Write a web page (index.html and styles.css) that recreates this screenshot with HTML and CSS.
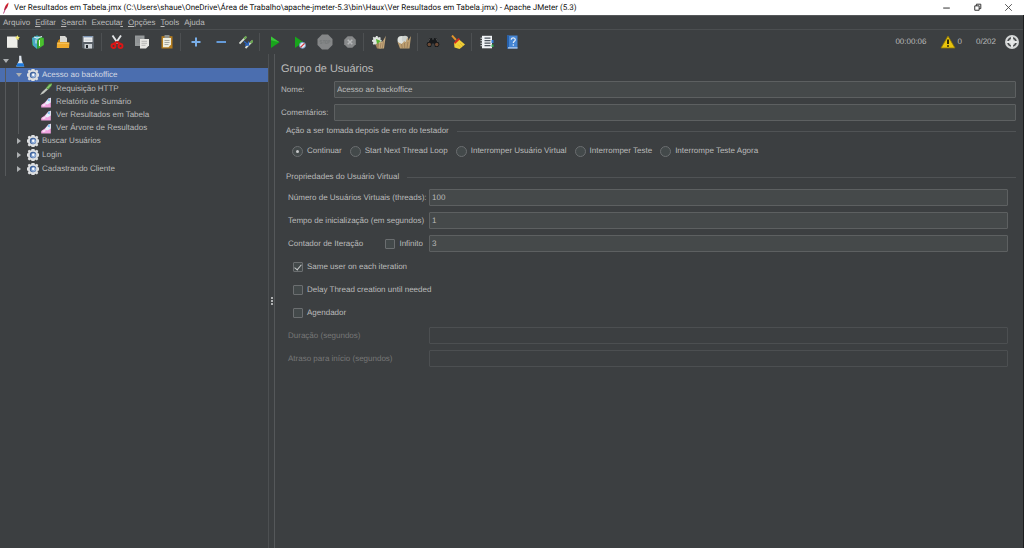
FILE: index.html
```html
<!DOCTYPE html>
<html lang="pt-BR">
<head>
<meta charset="utf-8">
<title>Apache JMeter (5.3)</title>
<link rel="stylesheet" href="styles.css">
</head>
<body>
<svg class="defs" aria-hidden="true">
  <defs>
    <linearGradient id="blueGrad" x1="0" y1="0" x2="1" y2="1"><stop offset="0" stop-color="#5a7db4"/><stop offset="1" stop-color="#b4cdee"/></linearGradient>
    <symbol id="gear" viewBox="0 0 12 12">
      <path d="M4.500 0h3l.3 1.200.8.3L9.900.7l1.400 1.400-.7 1.300.3.900L12 4.500v3l-1.100.3-.3.9.7 1.300-1.400 1.400-1.300-.7-.8.300L7.500 12h-3l-.3-1-.8-.3-1.300.7L.7 10l.7-1.300-.3-.9L0 7.500v-3l1.100-.3.3-.9L.7 2.100 2.100.7l1.300.8.8-.3z" fill="#dddfe1"/>
      <circle cx="6" cy="6" r="3.200" fill="#3c5f99"/>
      <circle cx="6.300" cy="6.200" r="2.500" fill="url(#blueGrad)"/>
      <circle cx="6.200" cy="5.800" r="1.200" fill="#fff"/>
    </symbol>
    <symbol id="chart" viewBox="0 0 10 10">
      <path d="M1 9.500V7.500L4 5.500 7 2l2-.5v8z" fill="#f0a3df"/>
      <path d="M4 6.200L7.200 2 9 1.500v4L6 7z" fill="#e6f2fb"/>
      <path d="M6.200 3.500L8 1.700V4.500z" fill="#6ab4ea"/>
      <path d="M1.500 7.500l2.500-1 1 1-2 1z" fill="#f8e2f5"/>
    </symbol>
  </defs>
</svg>
<div class="window">
  <header class="titlebar">
    <svg class="feather" viewBox="0 0 8 12" aria-hidden="true"><path d="M6.500.5C4 2 2.500 5 2 8.500 4.500 7.500 6.500 4 6.500.5z" fill="#d22128"/><path d="M4.500 4L1.500 11.500" stroke="#a02060" stroke-width=".8"/></svg>
    <span class="caption">Ver Resultados em Tabela.jmx (C:\Users\shaue\OneDrive\Área de Trabalho\apache-jmeter-5.3\bin\Haux\Ver Resultados em Tabela.jmx) - Apache JMeter (5.3)</span>
    <div class="winbtns">
      <button type="button" aria-label="Minimizar"><svg viewBox="0 0 10 10"><path d="M2 5.500h6" stroke="#444"/></svg></button>
      <button type="button" aria-label="Restaurar"><svg viewBox="0 0 10 10"><path d="M2.500 3.500h4v4h-4zM4 3.500v-1.500h4v4H6.500" fill="none" stroke="#333" stroke-width=".9"/></svg></button>
      <button type="button" aria-label="Fechar"><svg viewBox="0 0 10 10"><path d="M2 2l6 6M8 2L2 8" stroke="#444" stroke-width=".8"/></svg></button>
    </div>
  </header>

  <nav class="menubar">
    <button type="button">Arquivo</button>
    <button type="button"><u>E</u>ditar</button>
    <button type="button"><u>S</u>earch</button>
    <button type="button">Executa<u>r</u></button>
    <button type="button"><u>O</u>pções</button>
    <button type="button"><u>T</u>ools</button>
    <button type="button">Ajuda</button>
  </nav>

  <div class="toolbar">
    <button type="button" aria-label="Novo"><svg viewBox="0 0 14 14"><path d="M1 1.500h10.500v11.500H1z" fill="#eeeeea"/><path d="M1 12h10.500v1H1z" fill="#c9c9c4"/><path d="M11.500 0l.7 1.800 1.800.2-1.300 1.200.3 1.800-1.500-.9-1.500.9.3-1.800L9 2l1.800-.2z" fill="#f2ea72"/></svg></button>
    <button type="button" aria-label="Modelos"><svg viewBox="0 0 14 14"><path d="M1 3l5-2.500L13 3v7l-6 4-6-4z" fill="#2f9b3c"/><path d="M1 3l5-2.500L9 2 6 6v8L2 10.500z" fill="#49a7c8"/><path d="M3 2l3 1 5-1.500" stroke="#d8f0f4" stroke-width="1.200" fill="none"/><path d="M7 6l2.500-3 3 .5v6.500L8 13z" fill="#4cc02d"/><path d="M5 4.500v4M8.500 5v6" stroke="#e5f4e8" stroke-width="1"/></svg></button>
    <button type="button" aria-label="Abrir"><svg viewBox="0 0 14 14"><path d="M4 1h5l2 2v5H4z" fill="#d8d8d4"/><path d="M2 5.500l2-1.500v3h7l1.500 2v4H1z" fill="#c98510"/><path d="M1 7.500h12.500L13 13H.8z" fill="#f0ab2e"/><path d="M1.500 8.200h11.500" stroke="#fbd27a" stroke-width=".8"/></svg></button>
    <button type="button" aria-label="Salvar"><svg viewBox="0 0 14 14"><path d="M1 1h12v12.500H2L1 12.500z" fill="#596067"/><path d="M2.500 1h9v6h-9z" fill="#f2f3f4"/><path d="M2.500 1h9v1.400h-9z" fill="#7d95b4"/><path d="M3.500 4.200h7M3.500 5.700h7" stroke="#b5bcc3" stroke-width=".6"/><path d="M3.500 9h7.500v4.500H3.500z" fill="#cbd0d4"/><path d="M5 10h2v3H5z" fill="#23282d"/></svg></button>
    <span class="sep"></span>
    <button type="button" aria-label="Recortar"><svg viewBox="0 0 14 14"><path d="M2.500.5l5.500 8M11 .5L5.500 8.500" stroke="#e2e4e6" stroke-width="1.900"/><path d="M3.500 9l3.500-2L10.500 9" stroke="#cf1717" stroke-width="2.200" fill="none"/><circle cx="3.500" cy="11" r="2" fill="none" stroke="#dd1515" stroke-width="1.900"/><circle cx="10.500" cy="11" r="2" fill="none" stroke="#dd1515" stroke-width="1.900"/></svg></button>
    <button type="button" aria-label="Copiar"><svg viewBox="0 0 14 14"><path d="M0 .5h9.500V11H0z" fill="#95999a"/><path d="M1.500 3h5M1.500 5h5M1.500 7h4" stroke="#84888a" stroke-width=".7"/><path d="M5 4h9v6.500l-3 3H5z" fill="#e7e7e3"/><path d="M6.500 6.300h5.500M6.500 8.300h5.500M6.500 10.300h4" stroke="#a9aba8" stroke-width=".8"/></svg></button>
    <button type="button" aria-label="Colar"><svg viewBox="0 0 14 14"><path d="M1.500 1.200h11V13.500h-11z" fill="#b47c1e"/><path d="M3 3h8v6.500l-2.500 2.800H3z" fill="#ededdf"/><path d="M4.500 0h5v3h-5z" fill="#8d918e"/><path d="M4.500 5.500h5M4.500 7.500h5M4.500 9.500h4" stroke="#94968f" stroke-width=".8"/></svg></button>
    <span class="sep"></span>
    <button type="button" aria-label="Expandir tudo"><svg viewBox="0 0 14 14"><path d="M7 2.500v9M2.500 7h9" stroke="#79aee8" stroke-width="2"/></svg></button>
    <button type="button" aria-label="Recolher tudo"><svg viewBox="0 0 14 14"><path d="M2.500 7h9.500" stroke="#659bd9" stroke-width="2"/></svg></button>
    <button type="button" aria-label="Alternar"><svg viewBox="0 0 14 14"><path d="M.5 8.500L7 2" stroke="#d8ddd5" stroke-width="1.800"/><path d="M5 4l2.500-2.500" stroke="#68a84c" stroke-width="1.800"/><path d="M6.500 13L13.500 6" stroke="#d8ddd5" stroke-width="1.800"/><path d="M11.500 8L14 5.500" stroke="#68a84c" stroke-width="1.800"/><path d="M5 6.500l4.500 3.500M9.500 6.500V10H6" stroke="#2a66c2" stroke-width="1.300" fill="none"/></svg></button>
    <span class="sep"></span>
    <button type="button" aria-label="Iniciar"><svg viewBox="0 0 14 14"><path d="M3 1.500l8.500 5.700L3 13z" fill="#18a51c"/><path d="M3 1.500l8.500 5.700-8.500-2z" fill="#3bc53a"/></svg></button>
    <button type="button" aria-label="Iniciar sem pausas"><svg viewBox="0 0 14 14"><path d="M2 1.500l8.500 5.700L2 13z" fill="#18a51c"/><circle cx="9.500" cy="10.300" r="3" fill="#e8eef6" stroke="#6d96c2"/><path d="M7.500 12.300l4-4" stroke="#d83434" stroke-width="1.200"/></svg></button>
    <button type="button" class="big" aria-label="Interromper" disabled><svg viewBox="0 0 16 16"><path d="M5 .5h6L15.500 5v6L11 15.500H5L.5 11V5z" fill="#858788"/><path d="M3 6.500h2.300M3 6.500v1.500h2v1.500H3M6 6.500h2M7 6.500v3M8.500 6.500h1.700v3H8.500zM11.300 9.500v-3H13V8h-1.500" stroke="#76797a" stroke-width=".7" fill="none"/></svg></button>
    <button type="button" aria-label="Desligar" disabled><svg viewBox="0 0 14 14"><path d="M4.700 1.200h4.600l3.500 3.500v4.600l-3.500 3.500H4.700L1.200 9.300V4.700z" fill="#87898a"/><path d="M4.700 4.700l4.600 4.600M9.300 4.700L4.700 9.300" stroke="#b5b7b8" stroke-width="1.500"/></svg></button>
    <span class="sep"></span>
    <button type="button" aria-label="Limpar"><svg viewBox="0 0 14 14"><g transform="translate(0 1) scale(.8)"><path d="M5 0h2l.4 1.500 1 .4 1.400-.8 1.300 1.300-.8 1.300.4 1L12 5v2l-1.300.4-.4 1 .8 1.300L9.800 11l-1.400-.8-1 .4L7 12H5l-.4-1.400-1-.4-1.400.8L.9 9.700l.8-1.300-.4-1L0 7V5l1.300-.4.4-1L.9 2.300 2.200 1l1.400.8 1-.4z" fill="#dfe3df"/></g><path d="M6.500 7L9.500 13.500H5L3.500 9.500z" fill="#a4845b"/><path d="M7.500 6.500L6.500 13.500H12L13.800.8 11 6 9.500 7z" fill="#c4a77b"/><path d="M9 8l-.8 5M11.500 6l-1.200 7" stroke="#8b6f4d" stroke-width=".6"/><path d="M4 4l5 2-4 3z" fill="#58b531"/></svg></button>
    <button type="button" aria-label="Limpar tudo"><svg viewBox="0 0 14 14"><circle cx="4.500" cy="5" r="4" fill="#dfe3df"/><circle cx="8" cy="4" r="3.200" fill="#cdd1cd"/><path d="M.5 7l4 2L7.500 6l1 1.500L10.500 2l.7 3.500L14 1l-1.500 12.500H3z" fill="#bd9f71"/><path d="M4.500 9l.8 4M7.500 8l.2 5M11 7l-1 6" stroke="#8b6f4d" stroke-width=".6"/></svg></button>
    <span class="sep"></span>
    <button type="button" aria-label="Procurar"><svg viewBox="0 0 14 14"><path d="M3.500 3h2.300l.7 2h1l.7-2h2.300l3 6.500-1.500 2.500H9L8 8.500H6L5 12H2L.5 9.500z" fill="#17191b"/><circle cx="3.300" cy="9.500" r="1.700" fill="#6c4a35"/><circle cx="10.700" cy="9.500" r="1.700" fill="#6c4a35"/><path d="M4 3.500L2 7M10 3.500L12 7" stroke="#777" stroke-width=".6"/></svg></button>
    <button type="button" aria-label="Limpar procura"><svg viewBox="0 0 14 14"><path d="M1 .5L5 5" stroke="#e0942c" stroke-width="1.900"/><path d="M7.500 4L14 9.500l-5.500 4.500-5-1.500L3 8z" fill="#f0cf38"/><path d="M3 7.500l4.500-4.500 1.500 1.200-5 4.800z" fill="#d42a1d"/><path d="M7 9.500l3 3M9 8l3 3" stroke="#d9ab25" stroke-width=".7"/></svg></button>
    <span class="sep"></span>
    <button type="button" aria-label="Funções"><svg viewBox="0 0 14 14"><path d="M2 .8h10v12.500H2z" fill="#f1f4f7"/><path d="M4.500 3.200h6M4.500 5.700h6M4.500 8.200h6M4.500 10.700h6" stroke="#4a525b" stroke-width="1.200"/><path d="M.5 3.200h2.500M.5 5.700h2.500M.5 8.200h2.500M.5 10.700h2.500" stroke="#dfe4e8" stroke-width=".9"/><path d="M12.500 5v3" stroke="#2f7ad6" stroke-width="2"/><path d="M12.500 9.500v2.500" stroke="#35a853" stroke-width="2"/></svg></button>
    <button type="button" aria-label="Ajuda"><svg viewBox="0 0 14 14"><path d="M2 .5h10.500v13H2z" fill="#4585d3"/><path d="M2 .5h2v13H2z" fill="#2661ac"/><path d="M3 12.300h9.500v1.200H3z" fill="#bcd3ef"/><path d="M6.300 4.700c0-2.600 4-2.300 4 0 0 1.600-2 1.500-2 3.300M8.300 9.200v1.500" fill="none" stroke="#e3edf9" stroke-width="1.200"/></svg></button>
    <div class="status">
      <span class="clock">00:00:06</span>
      <button type="button" class="warn"><svg viewBox="0 0 16 14"><path d="M8 1l7 12H1z" fill="#e9c40c" stroke="#8d7605" stroke-width=".8"/><path d="M8 4.500v4.500M8 10.200v1.500" stroke="#1d1a05" stroke-width="1.800"/></svg>0</button>
      <span>0/202</span>
      <svg class="globe" viewBox="0 0 14 14" aria-hidden="true"><circle cx="7" cy="7" r="7" fill="#d5d7d7"/><circle cx="7" cy="7" r="4" fill="none" stroke="#4a4d4f" stroke-width="1.800"/><path d="M7 2v10M2 7h10" stroke="#e6e8e8" stroke-width="2.200"/></svg>
    </div>
  </div>

  <main class="main">
    <aside class="tree">
      <ul class="root">
        <li>
          <div class="row folder l0"><i class="arrow open"></i><svg class="ico flask" viewBox="0 0 12 14"><path d="M5 1h2.500l.5 5 3 7.500H1.500L5 6z" fill="#dfe6ee"/><path d="M3 9.500h7l1 4H1.500z" fill="#1b78dc"/></svg></div>
          <ul class="kids k1">
            <li>
              <div class="row folder l1 selected"><i class="arrow open"></i><svg class="ico"><use href="#gear"/></svg>Acesso ao backoffice</div>
              <ul class="kids k2">
                <li class="row l2"><svg class="ico" viewBox="0 0 12 12"><path d="M0 12l2-3 6-5.500L9.500 5 3.500 10.500z" fill="#c3c7c1"/><path d="M6 5L9 1l3-.8L11.500 3 8 6.500z" fill="#5da544"/><path d="M7.500 5L11 1.500" stroke="#b4de9b"/></svg>Requisição HTTP</li>
                <li class="row l2"><svg class="ico"><use href="#chart"/></svg>Relatório de Sumário</li>
                <li class="row l2"><svg class="ico"><use href="#chart"/></svg>Ver Resultados em Tabela</li>
                <li class="row l2"><svg class="ico"><use href="#chart"/></svg>Ver Árvore de Resultados</li>
              </ul>
            </li>
            <li class="row folder l1"><i class="arrow"></i><svg class="ico"><use href="#gear"/></svg>Buscar Usuários</li>
            <li class="row folder l1"><i class="arrow"></i><svg class="ico"><use href="#gear"/></svg>Login</li>
            <li class="row folder l1"><i class="arrow"></i><svg class="ico"><use href="#gear"/></svg>Cadastrando Cliente</li>
          </ul>
        </li>
      </ul>
    </aside>
    <div class="splitter"><i></i><i></i><i></i></div>

    <form class="panel">
      <h1>Grupo de Usuários</h1>
      <div class="head">
        <label for="nome">Nome:</label><input type="text" id="nome" value="Acesso ao backoffice">
        <label for="coment">Comentários:</label><input type="text" id="coment">
      </div>
      <section>
        <h2>Ação a ser tomada depois de erro do testador</h2>
        <div class="radios">
          <label><input type="radio" name="acao" checked>Continuar</label>
          <label><input type="radio" name="acao">Start Next Thread Loop</label>
          <label><input type="radio" name="acao">Interromper Usuário Virtual</label>
          <label><input type="radio" name="acao">Interromper Teste</label>
          <label><input type="radio" name="acao">Interrompe Teste Agora</label>
        </div>
      </section>
      <section>
        <h2>Propriedades do Usuário Virtual</h2>
        <div class="props">
          <label for="threads">Número de Usuários Virtuais (threads):</label><input type="text" id="threads" value="100">
          <label for="ramp">Tempo de inicialização (em segundos)</label><input type="text" id="ramp" value="1">
          <div class="loop"><label for="loops">Contador de Iteração</label><label class="check"><input type="checkbox">Infinito</label></div><input type="text" id="loops" value="3">
          <label class="check wide"><input type="checkbox" checked>Same user on each iteration</label>
          <label class="check wide"><input type="checkbox">Delay Thread creation until needed</label>
          <label class="check wide"><input type="checkbox">Agendador</label>
          <label class="off" for="dur">Duração (segundos)</label><input type="text" id="dur" disabled>
          <label class="off" for="delay">Atraso para início (segundos)</label><input type="text" id="delay" disabled>
        </div>
      </section>
    </form>
  </main>
</div>
</body>
</html>
```
FILE: styles.css
```css
* { box-sizing: border-box; }
body {
  margin: 0;
  background: #3c3f41;
  color: #bbb;
  font: 8px/12px "Liberation Sans", Arial, sans-serif;
  text-rendering: geometricPrecision;
}
button, input { font: inherit; color: inherit; text-rendering: inherit; }
button { border: 0; padding: 0; background: none; }
h1, h2, ul { margin: 0; padding: 0; font-weight: normal; list-style: none; }
.defs { position: absolute; width: 0; height: 0; }

.window {
  display: flex;
  flex-direction: column;
  min-height: 100vh;
  border-right: 1px solid #1c1d1e;
}

.titlebar {
  display: flex;
  align-items: center;
  height: 15px;
  margin-right: -1px;
  background: #fff;
  color: #111;
  font: 8px/14px Roboto, "Open Sans", sans-serif;
}
.feather { width: 8px; height: 12px; margin: 0 4px 0 2px; }
.caption { flex: 1; white-space: nowrap; }
.winbtns { display: flex; }
.winbtns button { display: grid; place-items: center; width: 31px; height: 15px; }
.winbtns svg { width: 11px; height: 11px; }

.menubar {
  display: flex;
  gap: 5px;
  height: 15px;
  padding: 1px 3px 0;
  border-bottom: 1px solid #4b4e50;
  border-top: 1px solid #55585a;
}

.toolbar {
  display: flex;
  align-items: center;
  height: 24px;
}
.toolbar > button { display: grid; place-items: center; width: 25px; height: 24px; }
.toolbar > button svg { width: 14px; height: 14px; }
.toolbar > .big svg { width: 16px; height: 16px; }
.sep { width: 1px; height: 18px; margin: 0 2px 0 1px; background: #4d5052; }
.status { display: flex; align-items: center; margin-left: auto; padding-right: 4px; }
.clock { margin-right: 13px; }
.warn { display: flex; align-items: center; gap: 2px; margin-right: 14px; }
.warn svg { width: 16px; height: 14px; }
.globe { width: 14px; height: 14px; margin-left: 9px; }

.main { display: flex; flex: 1; }
.tree { flex: 0 0 269px; border-right: 1px solid #4d5052; }
.row { display: flex; align-items: center; height: 13px; white-space: nowrap; }
.folder { height: 14px; }
.selected { background: #4b6eaf; color: #d3d9e4; }
.l0 { padding-left: 1px; }
.l1 { padding-left: 14px; }
.l2 { padding-left: 40px; }
.ico { flex: none; width: 12px; height: 12px; margin-right: 3px; }
.l0 .ico, .l1 .ico { margin-left: 4px; }
.l2 .ico { margin-right: 4px; }
.arrow { display: flex; align-items: center; justify-content: center; width: 9px; height: 9px; }
.arrow::before {
  content: "";
  border: solid transparent;
  border-width: 3px 0 3px 4px;
  border-left-color: #adb0b2;
}
.arrow.open::before { border-width: 4px 3px 0; border-color: #adb0b2 transparent transparent; }
.kids { position: relative; }
.kids::before { content: ""; position: absolute; top: 0; bottom: 0; width: 1px; background: #56595b; }
.k1::before { left: 5px; }
.k2::before { left: 18px; }

.splitter {
  display: flex;
  flex-direction: column;
  align-items: center;
  justify-content: center;
  gap: 1px;
  flex: 0 0 6px;
  border-right: 1px solid #55585a;
}
.splitter i { width: 2px; height: 2px; background: #b0b2b3; }

.panel { flex: 1; padding: 8px 7px 0 6px; }
h1 { margin-bottom: 5px; font-size: 11px; line-height: 14px; }
.head { display: grid; grid-template-columns: 47px 1fr; gap: 6px; align-items: center; }
input[type="text"] {
  width: 100%;
  min-width: 0;
  height: 17px;
  padding: 0 2px;
  background: #45494a;
  border: 1px solid #5d6061;
  border-radius: 1px;
}
input[type="text"]:disabled { background: #3c3f41; border-color: #4c4f51; }
h2 { display: flex; align-items: center; gap: 8px; padding-left: 5px; font-size: 8px; line-height: 12px; }
h2::after { content: ""; flex: 1; height: 1px; background: #505355; }
section { margin-top: 4px; }
.radios { display: flex; gap: 8px; padding: 8px 11px 10px; }
.radios label, .check { display: flex; align-items: center; gap: 4px; white-space: nowrap; }
input[type="radio"], input[type="checkbox"] {
  appearance: none;
  display: grid;
  place-items: center;
  width: 11px;
  height: 11px;
  margin: 0;
  background: #43494a;
  border: 1px solid #6b6e70;
  border-radius: 50%;
}
input[type="checkbox"] { width: 10px; height: 10px; border-radius: 1px; }
input[type="radio"]:checked::before { content: ""; width: 3px; height: 3px; border-radius: 50%; background: #c8cacb; }
input[type="checkbox"]:checked::before {
  content: "";
  width: 3px;
  height: 6px;
  border: solid #c8cacb;
  border-width: 0 1px 1px 0;
  transform: rotate(40deg);
}
.props {
  display: grid;
  grid-template-columns: 135px 1fr;
  grid-auto-rows: 17px;
  gap: 6px;
  align-items: center;
  padding: 6px 8px 6px 7px;
}
.props > label, .loop { white-space: nowrap; }
.loop { display: flex; justify-content: space-between; }
.wide { grid-column: 1 / -1; padding-left: 5px; }
.off { color: #777; }
```
